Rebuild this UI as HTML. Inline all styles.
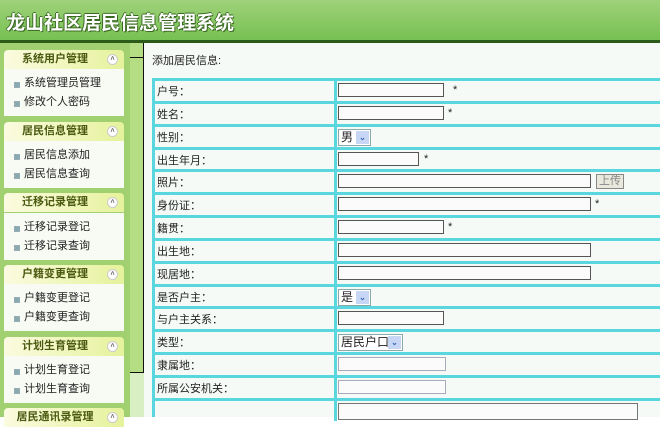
<!DOCTYPE html><html><head><meta charset="utf-8"><style>
*{margin:0;padding:0;box-sizing:border-box}
body{width:664px;height:417px;overflow:hidden;background:#fff;font-family:"Liberation Sans","Noto Sans CJK SC",sans-serif;font-size:12px;color:#222;position:relative}
.hd{position:absolute;left:0;top:0;width:660px;height:40px;background:linear-gradient(#9fd17a,#76c152)}
.hd span{position:absolute;left:6px;top:8px;font-size:19px;font-weight:bold;color:#fff;text-shadow:1px 1px 0 #3a6a22,-1px 0 0 #3a6a22,0 -1px 0 #3a6a22}
.hl{position:absolute;left:0;top:40px;width:660px;height:3px;background:#2c5a18}
.side{position:absolute;left:0;top:43px;width:130px;height:374px;background:#a0d070}
.sb{position:absolute;left:130px;top:43px;width:14px;height:330px;background:#b4dd84;border-right:1px solid #111;border-bottom:1px solid #111}
.sb2{position:absolute;left:130px;top:373px;width:14px;height:44px;background:#d8efc4}
.sbtick{position:absolute;left:130px;top:57px;width:14px;height:1px;background:#111}
.main{position:absolute;left:144px;top:43px;width:516px;height:374px;background:#f6faf6}
.ph{position:absolute;left:4px;width:120px;height:19px;background:linear-gradient(90deg,#fbfbe0,#e6f29c);border-radius:4px 4px 0 0;font-weight:bold;color:#4a5a10;font-size:11px;text-align:center;line-height:19px;padding-right:18px}
.ph i{position:absolute;right:6px;top:4px;width:11px;height:11px;border-radius:50%;background:#fff;border:1px solid #ccc;font-style:normal;font-size:7px;line-height:9px;color:#666;text-align:center}
.pb{position:absolute;left:4px;width:120px;background:#f8faf4}
.pb div{height:19px;line-height:19px;padding-left:20px;font-size:11px;position:relative}
.pb div:before{content:"";position:absolute;left:10px;top:8px;width:4px;height:4px;background:#8aa;border:1px solid #9ab}
.title{position:absolute;left:152px;top:52px;font-size:11px}
.row{position:absolute;left:152px;width:508px;height:23px;border-top:3px solid #5ad6de;border-left:3px solid #5ad6de}
.row .l{position:absolute;left:2px;top:2px;font-size:11px}
.row .c{position:absolute;left:179px;top:-3px;height:23px;border-left:3px solid #5ad6de}
.in{position:absolute;height:14px;border:1px solid #555;background:#fbfbfb;top:2px}
.st{position:absolute;top:3px;font-size:11px}
.sel{position:absolute;top:2px;height:17px;border:1px solid #8aa;background:#fff;font-size:12px;line-height:15px;padding-left:2px}
.sel b{position:absolute;right:1px;top:1px;width:13px;height:13px;background:#c6d6f4;color:#3466b8;font-size:8px;text-align:center;line-height:13px}
</style></head><body>
<div class="hd"><span>龙山社区居民信息管理系统</span></div><div class="hl"></div>
<div class="side"></div>
<div class="ph" style="top:50px">系统用户管理<i>˄</i></div>
<div class="pb" style="top:69px;height:47px;padding-top:5px"><div>系统管理员管理</div><div>修改个人密码</div></div>
<div class="ph" style="top:122px">居民信息管理<i>˄</i></div>
<div class="pb" style="top:141px;height:47px;padding-top:5px"><div>居民信息添加</div><div>居民信息查询</div></div>
<div class="ph" style="top:193px">迁移记录管理<i>˄</i></div>
<div class="pb" style="top:213px;height:47px;padding-top:5px"><div>迁移记录登记</div><div>迁移记录查询</div></div>
<div class="ph" style="top:265px">户籍变更管理<i>˄</i></div>
<div class="pb" style="top:284px;height:47px;padding-top:5px"><div>户籍变更登记</div><div>户籍变更查询</div></div>
<div class="ph" style="top:337px">计划生育管理<i>˄</i></div>
<div class="pb" style="top:356px;height:47px;padding-top:5px"><div>计划生育登记</div><div>计划生育查询</div></div>
<div class="ph" style="top:408px">居民通讯录管理<i>˄</i></div>
<div class="main"></div>
<div class="sb"></div><div class="sbtick"></div><div class="sb2"></div>
<div class="title">添加居民信息:</div>

<div class="row" style="top:78px"><span class="l">户号：</span><div class="c"></div><div class="in" style="left:183px;width:106px"></div><span class="st" style="left:298px">*</span></div>
<div class="row" style="top:101px"><span class="l">姓名：</span><div class="c"></div><div class="in" style="left:183px;width:106px"></div><span class="st" style="left:293px">*</span></div>
<div class="row" style="top:124px"><span class="l">性别：</span><div class="c"></div><div class="sel" style="left:183px;width:33px">男<b>⌄</b></div></div>
<div class="row" style="top:147px"><span class="l">出生年月：</span><div class="c"></div><div class="in" style="left:183px;width:81px"></div><span class="st" style="left:269px">*</span></div>
<div class="row" style="top:169px"><span class="l">照片：</span><div class="c"></div><div class="in" style="left:183px;width:253px"></div><div style="position:absolute;left:441px;top:2px;width:28px;height:15px;border:1px solid #888;background:#e8e8dc;color:#888;font-size:11px;text-align:center;line-height:13px">上传</div></div>
<div class="row" style="top:192px"><span class="l">身份证：</span><div class="c"></div><div class="in" style="left:183px;width:253px"></div><span class="st" style="left:440px">*</span></div>
<div class="row" style="top:215px"><span class="l">籍贯：</span><div class="c"></div><div class="in" style="left:183px;width:106px"></div><span class="st" style="left:293px">*</span></div>
<div class="row" style="top:238px"><span class="l">出生地：</span><div class="c"></div><div class="in" style="left:183px;width:253px"></div></div>
<div class="row" style="top:261px"><span class="l">现居地：</span><div class="c"></div><div class="in" style="left:183px;width:253px"></div></div>
<div class="row" style="top:284px"><span class="l">是否户主：</span><div class="c"></div><div class="sel" style="left:183px;width:33px">是<b>⌄</b></div></div>
<div class="row" style="top:306px"><span class="l">与户主关系：</span><div class="c"></div><div class="in" style="left:183px;width:106px"></div></div>
<div class="row" style="top:329px"><span class="l">类型：</span><div class="c"></div><div class="sel" style="left:183px;width:65px">居民户口<b>⌄</b></div></div>
<div class="row" style="top:352px"><span class="l">隶属地：</span><div class="c"></div><div class="in" style="left:183px;width:108px;border-color:#aab"></div></div>
<div class="row" style="top:375px"><span class="l">所属公安机关：</span><div class="c"></div><div class="in" style="left:183px;width:108px;border-color:#aab"></div></div>
<div class="row" style="top:398px;height:19px"><div class="c"></div><div class="in" style="left:183px;width:300px;height:17px;border-color:#777"></div></div>
<div style="position:absolute;left:660px;top:0;width:4px;height:417px;background:#fff"></div>
</body></html>
